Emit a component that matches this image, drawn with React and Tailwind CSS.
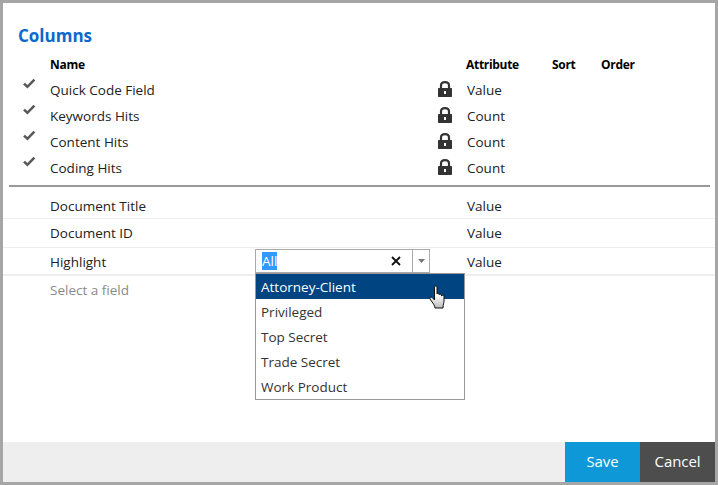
function Check() {
  return (
    <svg width="13" height="11" viewBox="0 0 13 11" className="shrink-0">
      <path d="M1 5.6 L4.4 8.8 L11.4 1.6" fill="none" stroke="#595959" strokeWidth="2.6" />
    </svg>
  );
}
function Lock() {
  return (
    <svg width="14" height="16" viewBox="0 0 14 16" className="block">
      <path d="M3 7 V4.6 C3 2.2 4.6 1.1 7 1.1 C9.4 1.1 11 2.2 11 4.6 V7" fill="none" stroke="#333" strokeWidth="2.2" />
      <path fillRule="evenodd" d="M.8 7 H13.2 a.8 .8 0 0 1 .8 .8 V15.2 a.8 .8 0 0 1 -.8 .8 H.8 a.8 .8 0 0 1 -.8 -.8 V7.8 a.8 .8 0 0 1 .8 -.8 Z M6 10 V13 H8 V10 Z" fill="#333" />
    </svg>
  );
}
function Locked({ name, attr }) {
  return (
    <div className="flex h-[26px] items-center">
      <div className="w-[47px] pl-[20px] -mt-[14px]"><Check /></div>
      <div className="w-[388px]">{name}</div>
      <div className="w-[29px] -mt-[2px]"><Lock /></div>
      <div>{attr}</div>
    </div>
  );
}
export default function App() {
  return (
    <div className="w-[718px] h-[485px] border-[3px] border-[#a6a6a6] bg-white flex flex-col text-[13.5px] text-[#222] font-['Open_Sans',sans-serif] overflow-hidden">
      <div className="flex-1 min-h-0 flex flex-col">
        <h1 className="mt-[21px] ml-[15px] text-[17px] leading-[24px] font-bold text-[#0a6acb] tracking-[0px]">Columns</h1>
        <div className="flex h-[20px] items-center mt-[7px] text-[12px] font-bold text-black tracking-[-0.3px]">
          <div className="w-[47px]" />
          <div className="w-[416px]">Name</div>
          <div className="w-[86px]">Attribute</div>
          <div className="w-[49px]">Sort</div>
          <div>Order</div>
        </div>
        <div className="pt-[2px]">
          <Locked name="Quick Code Field" attr="Value" />
          <Locked name="Keywords Hits" attr="Count" />
          <Locked name="Content Hits" attr="Count" />
          <Locked name="Coding Hits" attr="Count" />
        </div>
        <div className="h-[2px] bg-[#999] ml-[6px] mr-[5px] mt-[4px]" />
        <div className="flex h-[32px] items-center pt-[8px] pl-[47px] border-b border-[#eee]">
          <div className="w-[417px]">Document Title</div><div>Value</div>
        </div>
        <div className="flex h-[29px] items-center pt-[1px] pl-[47px] border-b border-[#eee]">
          <div className="w-[417px]">Document ID</div><div>Value</div>
        </div>
        <div className="relative flex h-[28px] items-center pt-[3px] pl-[47px] border-b-2 border-[#eee]">
          <div className="w-[417px]">Highlight</div><div>Value</div>
          <div className="absolute left-[252px] top-[1px] w-[175px] h-[24px] border border-[#aaa] bg-white flex items-center">
            <div className="flex-1 flex items-center pl-[6px]"><span className="bg-[#3399ff] text-white leading-[18px]">All</span></div>
            <svg width="10" height="10" viewBox="0 0 10 10" className="mr-[11px]"><path d="M1 1 L9 9 M9 1 L1 9" stroke="#111" strokeWidth="1.8" /></svg>
            <div className="w-[17px] h-full border-l border-[#aaa] flex items-center justify-center">
              <svg width="7" height="4" viewBox="0 0 7 4"><path d="M0 0 H7 L3.5 4 Z" fill="#777" /></svg>
            </div>
          </div>
          <div className="absolute left-[252px] top-[25px] w-[210px] h-[127px] border border-[#999] bg-white z-10">
            <div className="h-[25px] pl-[5px] pt-[2px] flex items-center bg-[#004481] text-white">Attorney-Client</div>
            <div className="h-[25px] pl-[5px] pt-[2px] flex items-center text-[#333]">Privileged</div>
            <div className="h-[25px] pl-[5px] pt-[2px] flex items-center text-[#333]">Top Secret</div>
            <div className="h-[25px] pl-[5px] pt-[2px] flex items-center text-[#333]">Trade Secret</div>
            <div className="h-[25px] pl-[5px] pt-[2px] flex items-center text-[#333]">Work Product</div>
          </div>
          <svg width="18" height="24" viewBox="0 0 18 24" className="absolute left-[426px] top-[37px] z-20">
            <defs><linearGradient id="g" x1="0" y1="0" x2="0" y2="1"><stop offset="0.4" stopColor="#fff" /><stop offset="1" stopColor="#bbb" /></linearGradient></defs>
            <path d="M5.5 2 C5.5 .6 8 .6 8 2 V9 C8 8 10.2 8 10.2 9.2 V10 C10.2 9 12.4 9 12.4 10.2 V11 C12.4 10 15 10 15 11.5 V16 C15 18 14 19.5 14 23 H6 C6 20.5 4 18.5 1 14 C.2 12.5 1.8 11.2 3.2 12.6 L5.5 15 Z" fill="url(#g)" stroke="#111" strokeWidth="1" />
          </svg>
        </div>
        <div className="pl-[47px] pt-[5px] text-[#8a8a8a] leading-[18px]">Select a field</div>
      </div>
      <div className="h-[40px] bg-[#eeeeee] flex justify-end text-white text-[15px] tracking-[-0.1px]">
        <div className="w-[75px] bg-[#0e98d8] flex items-center justify-center pb-[1px]">Save</div>
        <div className="w-[75px] bg-[#4d4d4d] flex items-center justify-center pb-[1px]">Cancel</div>
      </div>
    </div>
  );
}
